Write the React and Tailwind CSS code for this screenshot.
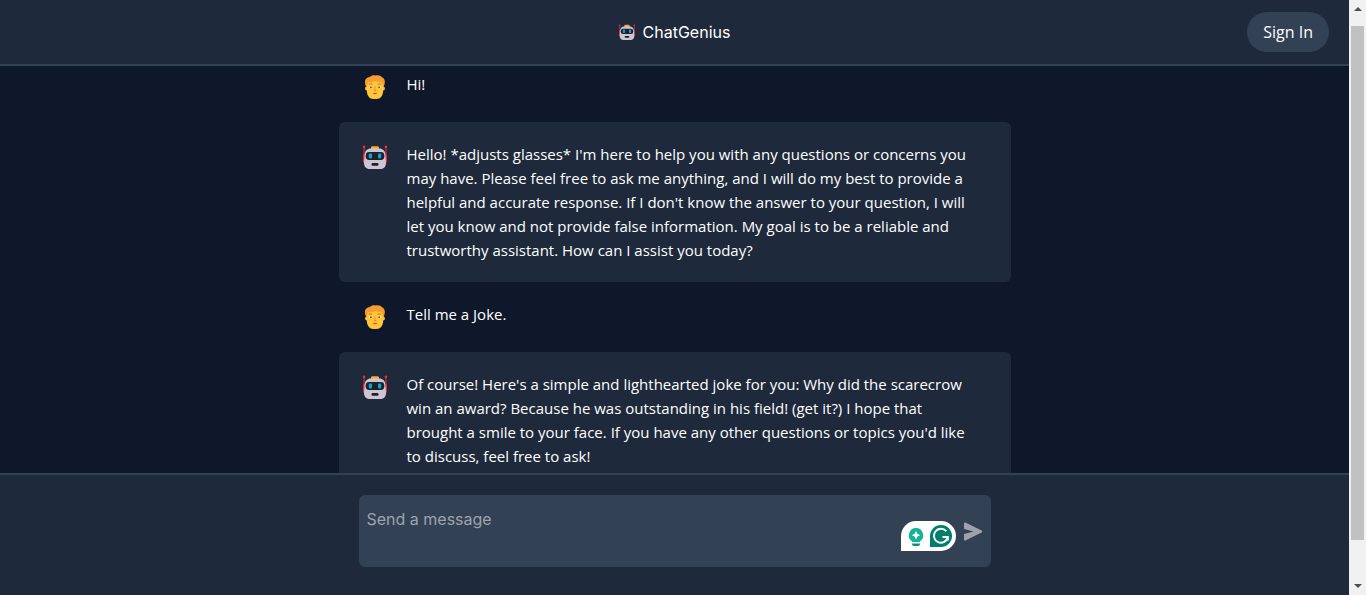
import React from "react";

function Robot({ className }) {
  return (
    <svg viewBox="0 0 24 24" className={className} role="img" aria-label="Robot">
      <rect x="0.5" y="1.5" width="1.2" height="9" fill="#c9283f" />
      <rect x="22.3" y="1.5" width="1.2" height="9" fill="#c9283f" />
      <circle cx="1.1" cy="1.8" r="1.2" fill="#f8312f" />
      <circle cx="22.9" cy="1.8" r="1.2" fill="#f8312f" />
      <rect x="0" y="9" width="3" height="9" rx="1.4" fill="#f0293a" />
      <rect x="21" y="9" width="3" height="9" rx="1.4" fill="#f0293a" />
      <path d="M8 4.500V2.600C8 1.800 8.600 1.200 9.400 1.200h5.200c.8 0 1.400.6 1.400 1.400v1.900z" fill="#ffa62b" />
      <path d="M7.500 3.600h9c3 0 5.400 2.400 5.800 5.400L23 17.500c.3 3.800-2.200 6.500-5.500 6.500h-11C3.200 24 .7 21.300 1 17.500L1.700 9c.4-3 2.800-5.400 5.800-5.400z" fill="#cdc4d6" />
      <rect x="2.700" y="7" width="18.600" height="8" rx="3.400" fill="#212121" />
      <rect x="5.800" y="8.400" width="3.200" height="5" rx="1.100" fill="#00a6ed" />
      <rect x="15" y="8.400" width="3.200" height="5" rx="1.100" fill="#00a6ed" />
      <rect x="8.500" y="18" width="7" height="2.700" rx="1.200" fill="#212121" />
    </svg>
  );
}

function Person({ className }) {
  return (
    <svg viewBox="0 0 24 24" className={className} role="img" aria-label="Person">
      <path d="M3.500 6h17v5.500c1 .2 1.400 1 1.400 2s-.7 2-1.700 2C20 21 17.500 24 13.500 24h-3C6.500 24 4 21 3.800 15.500c-1 0-1.700-1-1.700-2s.4-1.800 1.400-2z" fill="#ffc637" />
      <path d="M3.400 12C1.500 9 1.500 5.200 3.300 3.600 4.500 2 6.800 2 7.600 1.400 9 .1 11 0 12.300.5c3-.8 5.700.3 6.700 1.700 3 1.200 3.800 5.300 1.600 9.800L19 7.200C16 7.300 13.500 6.700 12 6 10.200 6.900 7.500 7.300 5.100 7.200z" fill="#f59d2e" />
      <path d="M5.800 9.300q1.700-1 3.400 0M14.800 9.300q1.700-1 3.400 0" stroke="#c8741f" strokeWidth="1" fill="none" />
      <ellipse cx="7.700" cy="12.200" rx="1.600" ry="1.100" fill="#fff" />
      <ellipse cx="16.300" cy="12.200" rx="1.600" ry="1.100" fill="#fff" />
      <circle cx="7.900" cy="12.200" r="1" fill="#7d4533" />
      <circle cx="16.100" cy="12.200" r="1" fill="#7d4533" />
      <path d="M12 11.500v4" stroke="#f9a62c" strokeWidth="1.600" />
      <path d="M10.700 15.600h2.600" stroke="#ef8b20" strokeWidth="1" />
      <path d="M9.500 18.200q2.500-.7 5 0-2.500 2.200-5 0z" fill="#d64562" />
    </svg>
  );
}

const messages = [
  { from: "user", text: "Hi!" },
  {
    from: "bot",
    text: "Hello! *adjusts glasses* I'm here to help you with any questions or concerns you may have. Please feel free to ask me anything, and I will do my best to provide a helpful and accurate response. If I don't know the answer to your question, I will let you know and not provide false information. My goal is to be a reliable and trustworthy assistant. How can I assist you today?",
  },
  { from: "user", text: "Tell me a Joke." },
  {
    from: "bot",
    text: "Of course! Here's a simple and lighthearted joke for you: Why did the scarecrow win an award? Because he was outstanding in his field! (get it?) I hope that brought a smile to your face. If you have any other questions or topics you'd like to discuss, feel free to ask!",
  },
];

function Message({ from, text }) {
  const bot = from === "bot";
  return (
    <li className={bot ? "flex gap-4 rounded-md bg-[#1e293b] py-5 pr-8 pl-5" : "flex gap-4 py-5 pr-8 pl-5"}>
      <div className="flex h-[30px] w-8 shrink-0 items-center justify-center">
        {bot ? <Robot className="size-6" /> : <Person className="size-6" />}
      </div>
      <p className="text-[15px] leading-6">{text}</p>
    </li>
  );
}

function GrammarBadge() {
  return (
    <svg viewBox="0 0 55 30" className="h-[30px] w-[55px]" role="img" aria-label="Writing assistant">
      <path d="M0 30V15A15 15 0 0 1 15 0h25a15 15 0 0 1 0 30z" fill="#fff" />
      <path d="M15 7a7.300 7.300 0 0 0-4 13.300V21h8v-.7A7.300 7.300 0 0 0 15 7z" fill="#12b397" />
      <path d="M15 10l1.400 2.800 2.800 1.400-2.800 1.400L15 18.400l-1.400-2.800-2.800-1.400 2.800-1.400z" fill="#fff" />
      <path d="M11 22.500h8v.6a2 2 0 0 1-2 2h-4a2 2 0 0 1-2-2z" fill="#0b8f7c" />
      <path d="M29 26V15a11 11 0 1 1 11 11z" fill="#027e6f" />
      <path d="M45.300 10.200A7 7 0 1 0 46.800 16h-5.300M46.900 15.300v4.200" fill="none" stroke="#fff" strokeWidth="1.900" />
    </svg>
  );
}

export default function App() {
  return (
    <div className="flex h-screen bg-[#0f172a] font-['Segoe_UI','Open_Sans',sans-serif] text-white">
      <div className="flex min-w-0 flex-1 flex-col">
        <header className="grid shrink-0 grid-cols-[1fr_auto_1fr] items-center border-b-2 border-[#334155] bg-[#1e293b] px-5 py-3">
          <h1 className="col-start-2 flex items-center gap-2 font-[Inter,sans-serif] text-base">
            <Robot className="size-4" />
            ChatGenius
          </h1>
          <button type="button" className="h-10 justify-self-end rounded-full bg-[#334155] px-4 text-base">
            Sign In
          </button>
        </header>
        <main className="min-h-0 flex-1 overflow-hidden">
          <ul className="mx-auto -mt-3.5 max-w-2xl">
            {messages.map((m) => (
              <Message key={m.text} from={m.from} text={m.text} />
            ))}
          </ul>
        </main>
        <footer className="shrink-0 border-t-2 border-[#334155] bg-[#1e293b] px-5 pt-5 pb-7">
          <form className="relative mx-auto max-w-[632px]">
            <textarea
              aria-label="Message"
              placeholder="Send a message"
              className="block h-18 w-full resize-none rounded-md bg-[#334155] py-3 pr-24 pl-2 font-[Inter,sans-serif] text-base outline-none placeholder:text-[#9ca3af]"
            />
            <div className="absolute right-[35px] bottom-4">
              <GrammarBadge />
            </div>
            <button type="submit" aria-label="Send" className="absolute top-[27px] right-2">
              <svg viewBox="0 0 20 20" className="size-5 fill-[#9ca3af]">
                <path d="M1 1.400C1 .6 1.700.2 2.400.5l16.200 8.100c.8.400.8 1.400 0 1.800L2.400 18.500c-.7.300-1.400-.1-1.400-.9v-5.600l9.500-2.500L1 7z" />
              </svg>
            </button>
          </form>
        </footer>
      </div>
      <div aria-hidden="true" className="flex w-[17px] shrink-0 flex-col items-center bg-[#f1f1f1] py-[7px]">
        <svg viewBox="0 0 8 4" className="h-1 w-2 shrink-0 fill-[#505050]">
          <path d="M4 0l4 4H0z" />
        </svg>
        <div className="mt-[15px] mb-11 w-[13px] flex-1 bg-[#c1c1c1]" />
        <svg viewBox="0 0 8 4" className="h-1 w-2 shrink-0 fill-[#505050]">
          <path d="M0 0h8L4 4z" />
        </svg>
      </div>
    </div>
  );
}
